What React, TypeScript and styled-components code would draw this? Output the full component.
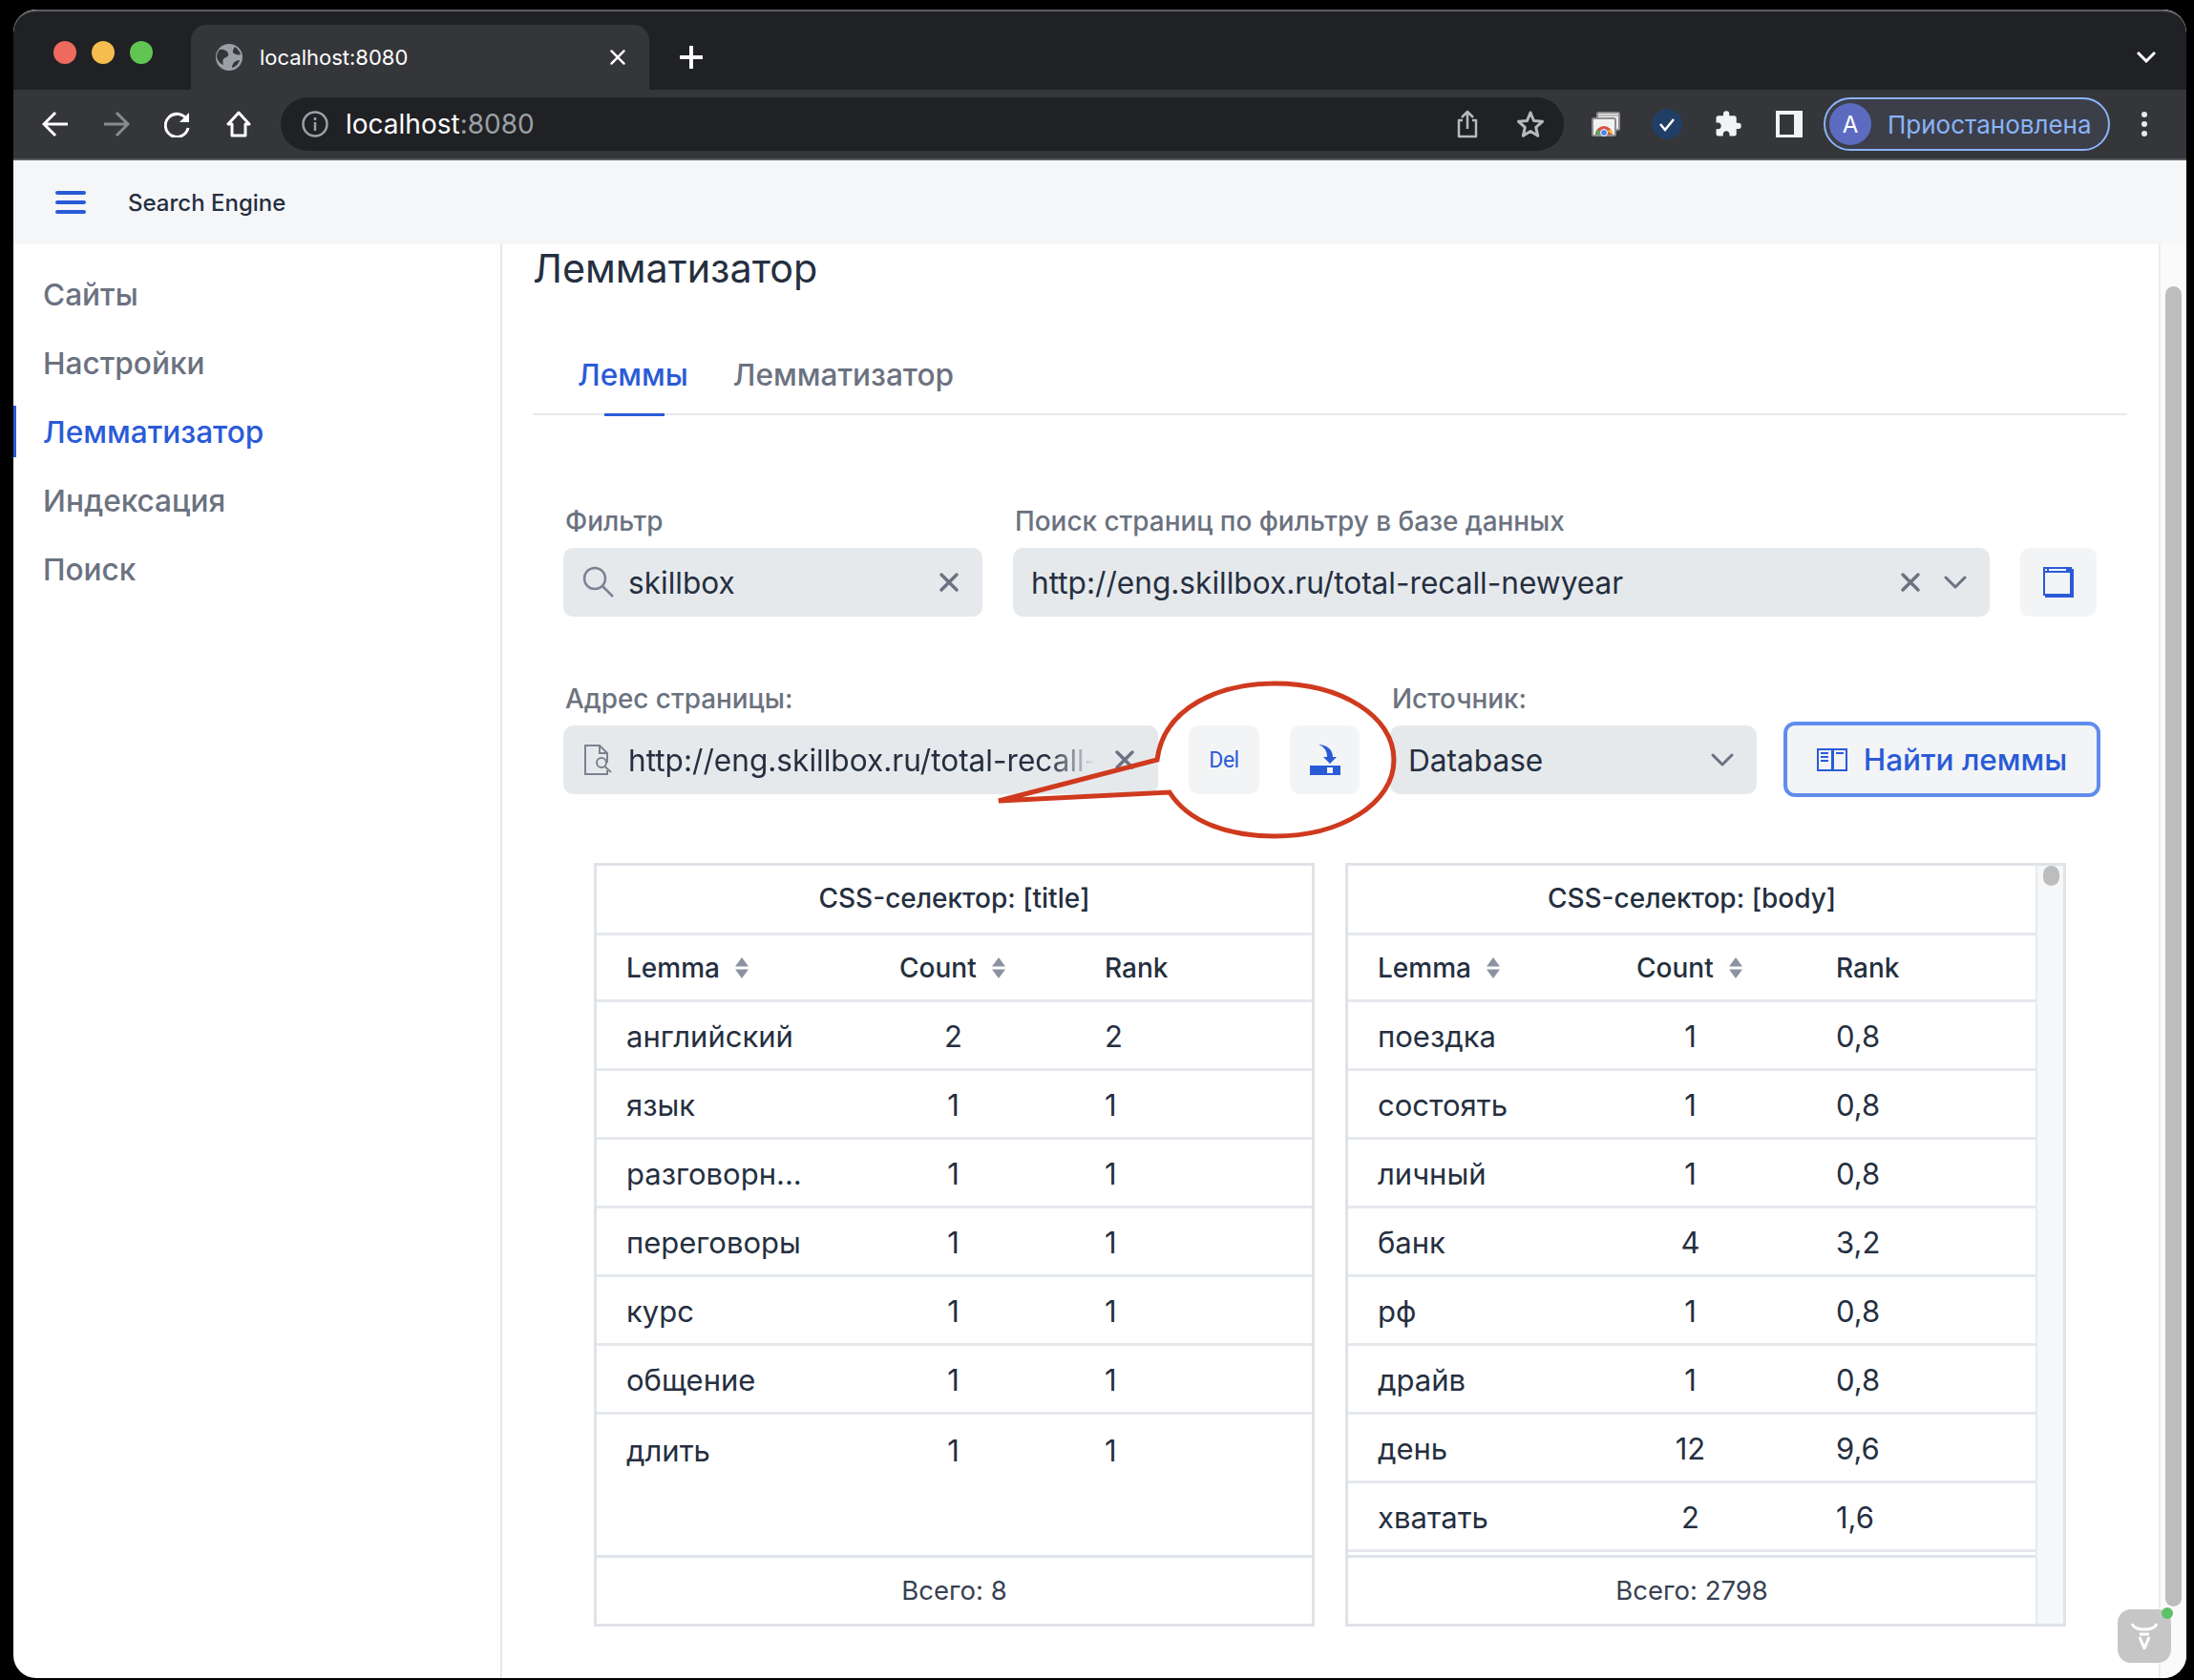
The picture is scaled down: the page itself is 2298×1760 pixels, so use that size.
import React from 'react';
import styled, { createGlobalStyle } from 'styled-components';

const Global = createGlobalStyle`
  html, body { margin: 0; padding: 0; background: #000; }
  body { font-family: Inter, "Noto Sans", sans-serif; color: #252f3f; }
  * { box-sizing: border-box; }
`;

const BLUE = '#2a5bd7';
const INK = '#252f3f';

const Page = styled.div`
  width: 2298px;
  height: 1760px;
  padding: 10px 8px 2px 14px;
  background: #000;
  overflow: hidden;
`;
const Win = styled.div`
  position: relative;
  width: 100%;
  height: 100%;
  border-radius: 24px;
  overflow: hidden;
  background: #fff;
  display: flex;
  flex-direction: column;
`;
const TabStrip = styled.div`
  height: 84px;
  background: #202124;
  border-top: 2px solid #5c5d60;
  border-radius: 24px 24px 0 0;
  display: flex;
  align-items: flex-end;
  padding-left: 42px;
`;
const Lights = styled.div`
  display: flex;
  gap: 16px;
  width: 144px;
  align-self: flex-start;
  padding-top: 31px;
`;
const Light = styled.span<{ $c: string }>`
  width: 24px;
  height: 24px;
  border-radius: 50%;
  background: ${p => p.$c};
`;
const Tab = styled.div`
  width: 480px;
  height: 68px;
  background: #35363a;
  border-radius: 16px 16px 0 0;
  display: flex;
  align-items: center;
  padding: 0 24px 0 26px;
  color: #fff;
  font-size: 22px;
  gap: 18px;
`;
const TabTitle = styled.span`
  flex: 1;
`;
const NewTab = styled.div`
  margin-left: 31px;
  height: 68px;
  display: flex;
  align-items: center;
`;
const StripEnd = styled.div`
  margin-left: auto;
  margin-right: 32px;
  height: 68px;
  display: flex;
  align-items: center;
`;
const Toolbar = styled.div`
  height: 74px;
  background: #35363a;
  border-bottom: 2px solid #5b5c5f;
  display: flex;
  align-items: center;
  padding: 0 0 0 30px;
`;
const Nav = styled.div`
  display: flex;
  gap: 36px;
`;
const NavBtn = styled.div`
  width: 28px;
  height: 30px;
  display: flex;
  align-items: center;
`;
const Omni = styled.div`
  margin-left: 30px;
  width: 1344px;
  height: 56px;
  background: #202124;
  border-radius: 28px;
  display: flex;
  align-items: center;
  padding: 0 20px 0 22px;
  font-size: 28px;
  color: #fff;
`;
const Host = styled.span`
  margin-left: 18px;
  flex: 1;
`;
const Dim = styled.span`
  color: #9aa0a6;
`;
const OmniIcon = styled.span<{ $ml: number }>`
  display: flex;
  margin-left: ${p => p.$ml}px;
`;
const Ext = styled.div`
  width: 64px;
  display: flex;
  justify-content: center;
  align-items: center;
`;
const Exts = styled.div`
  margin-left: 12px;
  display: flex;
`;
const Profile = styled.div`
  margin-left: 4px;
  width: 300px;
  height: 56px;
  border: 2px solid #8ab4f8;
  border-radius: 28px;
  background: #3c3f4a;
  display: flex;
  align-items: center;
  padding-left: 4px;
  color: #8ab4f8;
  font-size: 26px;
`;
const Avatar = styled.span`
  width: 44px;
  height: 44px;
  border-radius: 50%;
  background: #5c6bc0;
  color: #fff;
  font-size: 24px;
  display: flex;
  align-items: center;
  justify-content: center;
  margin-right: 17px;
`;
const Kebab = styled.div`
  margin-left: 33px;
  display: flex;
  flex-direction: column;
  gap: 4px;
  span { width: 6px; height: 6px; border-radius: 50%; background: #e8eaed; display: block; }
`;
const AppBar = styled.div`
  height: 88px;
  background: #f5f6f8;
  display: flex;
  align-items: center;
  padding-left: 44px;
  font-size: 24px;
  font-weight: 500;
  color: ${INK};
  gap: 44px;
`;
const Burger = styled.div`
  width: 32px;
  display: flex;
  flex-direction: column;
  gap: 6px;
  span { height: 4px; border-radius: 2px; background: ${BLUE}; display: block; }
`;
const Body = styled.div`
  flex: 1;
  display: flex;
  min-height: 0;
`;
const Side = styled.nav`
  width: 512px;
  border-right: 2px solid #e5e7eb;
  padding-top: 16px;
`;
const SideItem = styled.div<{ $active?: boolean }>`
  height: 72px;
  display: flex;
  align-items: center;
  padding-left: 31px;
  font-size: 31.600px;
  font-weight: 500;
  color: ${p => (p.$active ? BLUE : '#6b7280')};
  position: relative;
  ${p =>
    p.$active &&
    `&::before { content: ''; position: absolute; left: 0; top: 9px; bottom: 9px; width: 3px; background: ${BLUE}; }`}
`;
const Main = styled.main`
  flex: 1;
  min-width: 0;
  padding: 0 33px 0 32px;
`;
const Title = styled.h1`
  margin: 0;
  height: 50px;
  font-size: 41.300px;
  line-height: 50px;
  font-weight: 400;
  color: ${INK};
  white-space: nowrap;
`;
const Tabs = styled.div`
  margin-top: 44px;
  height: 85px;
  border-bottom: 2px solid #e5e7eb;
  display: flex;
  padding-left: 47px;
  gap: 47px;
`;
const TabLink = styled.div<{ $active?: boolean }>`
  position: relative;
  font-size: 31.600px;
  font-weight: 500;
  height: 84px;
  line-height: 86px;
  color: ${p => (p.$active ? BLUE : '#6b7280')};
  ${p =>
    p.$active &&
    `&::after { content: ''; position: absolute; left: 28px; right: 25px; bottom: -2px; height: 3px; background: ${BLUE}; }`}
`;
const Row = styled.div<{ $top: number }>`
  display: flex;
  align-items: flex-end;
  margin-top: ${p => p.$top}px;
  padding-left: 32px;
`;
const Field = styled.div<{ $w: number; $ml?: number }>`
  width: ${p => p.$w}px;
  margin-left: ${p => p.$ml ?? 0}px;
  flex: none;
`;
const Label = styled.div`
  font-size: 27.900px;
  line-height: 32px;
  height: 32px;
  margin-bottom: 12px;
  padding-left: 2px;
  color: #6b7280;
  font-weight: 500;
  white-space: nowrap;
`;
const Control = styled.div`
  height: 72px;
  background: #e6e9ec;
  border-radius: 10px;
  display: flex;
  align-items: center;
  padding: 0 24px 0 19px;
  font-size: 31.600px;
  color: ${INK};
  overflow: hidden;
`;
const ControlText = styled.span<{ $ml?: number; $fade?: boolean }>`
  flex: 1;
  min-width: 0;
  margin-left: ${p => p.$ml ?? 0}px;
  white-space: nowrap;
  overflow: hidden;
  ${p =>
    p.$fade &&
    `margin-right: 20px; -webkit-mask-image: linear-gradient(to right, #000 90%, transparent 100%); mask-image: linear-gradient(to right, #000 90%, transparent 100%);`}
`;
const Spacer = styled.span<{ $w: number }>`
  width: ${p => p.$w}px;
  flex: none;
`;
const IconBtn = styled.div<{ $w: number; $ml: number }>`
  width: ${p => p.$w}px;
  margin-left: ${p => p.$ml}px;
  height: 72px;
  flex: none;
  background: #f3f4f6;
  border-radius: 10px;
  display: flex;
  align-items: center;
  justify-content: center;
  color: ${BLUE};
  font-family: Roboto, Inter, sans-serif;
  font-size: 23px;
  letter-spacing: -0.500px;
`;
const Primary = styled.div`
  width: 332px;
  height: 79px;
  margin-left: 28px;
  margin-bottom: -3px;
  flex: none;
  background: #f3f4f6;
  border: 4px solid #5f8ded;
  border-radius: 12px;
  display: flex;
  align-items: center;
  justify-content: center;
  gap: 17px;
  color: ${BLUE};
  font-size: 31.500px;
  font-weight: 500;
`;
const Tables = styled.div`
  display: flex;
  gap: 32px;
  margin-top: 72px;
  margin-left: 64px;
`;
const Table = styled.div`
  position: relative;
  width: 755px;
  height: 800px;
  border: 3px solid #dfe3e8;
  display: flex;
  flex-direction: column;
  color: ${INK};
`;
const Caption = styled.div<{ $inset?: number }>`
  height: 73px;
  flex: none;
  border-bottom: 3px solid #e5e8ec;
  padding-right: ${p => p.$inset ?? 0}px;
  padding-bottom: 2px;
  display: flex;
  align-items: center;
  justify-content: center;
  font-size: 28px;
  font-weight: 500;
`;
const GridRow = styled.div<{ $cols: string; $h?: number; $inset?: number; $plain?: boolean; $head?: boolean }>`
  height: ${p => p.$h ?? 72}px;
  flex: none;
  margin-right: ${p => p.$inset ?? 0}px;
  display: grid;
  grid-template-columns: ${p => p.$cols};
  align-items: center;
  border-bottom: ${p => (p.$plain ? '0' : '3px solid #e5e8ec')};
  font-size: 31px;
  padding-top: ${p => (p.$head ? 0 : 2)}px;
`;
const Head = styled.div`
  display: flex;
  align-items: center;
  gap: 15px;
  font-size: 28px;
  font-weight: 500;
`;
const CountCell = styled.div`
  width: 113px;
  text-align: center;
`;
const RowsArea = styled.div`
  flex: 1;
  min-height: 0;
`;
const Foot = styled.div<{ $inset?: number }>`
  height: 72px;
  flex: none;
  border-top: 3px solid #dfe3e8;
  margin-right: ${p => p.$inset ?? 0}px;
  padding-bottom: 2px;
  display: flex;
  align-items: center;
  justify-content: center;
  font-size: 27.500px;
  color: #374151;
`;
const InnerTrack = styled.div`
  position: absolute;
  top: 0;
  bottom: 0;
  right: 0;
  width: 29px;
  background: #f6f7f8;
  border-left: 2px solid #e8ebee;
`;
const InnerThumb = styled.div`
  position: absolute;
  top: 0;
  left: 6px;
  width: 17px;
  height: 21px;
  border-radius: 9px;
  background: #bdbdbd;
`;
const ScrollTrack = styled.div`
  width: 29px;
  flex: none;
  background: #fafafa;
  border-left: 2px solid #ececec;
  padding: 44px 5px 0 5px;
`;
const ScrollThumb = styled.div`
  height: 1383px;
  width: 17px;
  border-radius: 9px;
  background: #bdbdbd;
`;
const Badge = styled.div`
  position: absolute;
  left: 2204px;
  top: 1676px;
  width: 56px;
  height: 56px;
  border-radius: 14px;
  background: #c6c6c6;
  display: flex;
  align-items: center;
  justify-content: center;
  &::after {
    content: '';
    position: absolute;
    right: -2px;
    top: -2px;
    width: 12px;
    height: 12px;
    border-radius: 50%;
    background: #5cc169;
  }
`;
const Callout = styled.svg`
  position: absolute;
  left: 0;
  top: 0;
  pointer-events: none;
`;

const X = ({ s = 22, c = '#6b7280', w = 3.500 }: { s?: number; c?: string; w?: number }) => (
  <svg width={s} height={s} viewBox="0 0 22 22" fill="none" stroke={c} strokeWidth={w} strokeLinecap="round">
    <path d="M3 3l16 16M19 3L3 19" />
  </svg>
);
const Chev = ({ c = '#6b7280' }: { c?: string }) => (
  <svg width="24" height="14" viewBox="0 0 24 14" fill="none" stroke={c} strokeWidth="3" strokeLinecap="round" strokeLinejoin="round">
    <path d="M2 2l10 10L22 2" />
  </svg>
);
const Sort = () => (
  <svg width="16" height="22" viewBox="0 0 16 22" fill="#8b93a1">
    <path d="M8 0l7 9.500H1zM8 22L1 12.500h14z" />
  </svg>
);

const left = ['английский', 'язык', 'разговорн...', 'переговоры', 'курс', 'общение', 'длить'];
const leftN = [['2', '2'], ['1', '1'], ['1', '1'], ['1', '1'], ['1', '1'], ['1', '1'], ['1', '1']];
const right = ['поездка', 'состоять', 'личный', 'банк', 'рф', 'драйв', 'день', 'хватать'];
const rightN = [['1', '0,8'], ['1', '0,8'], ['1', '0,8'], ['4', '3,2'], ['1', '0,8'], ['1', '0,8'], ['12', '9,6'], ['2', '1,6']];

const Cols1 = '31px 286px 215px 1fr';
const Cols2 = '31px 271px 209px 1fr';

function DataTable({ title, names, nums, foot, cols, inset, scroll, plainLast }: {
  title: string; names: string[]; nums: string[][]; foot: string; cols: string; inset: number; scroll?: boolean; plainLast?: boolean;
}) {
  return (
    <Table>
      {scroll && (
        <InnerTrack>
          <InnerThumb />
        </InnerTrack>
      )}
      <Caption $inset={inset}>{title}</Caption>
      <GridRow $cols={cols} $h={70} $inset={inset} $head>
        <span />
        <Head>Lemma <Sort /></Head>
        <Head>Count <Sort /></Head>
        <Head>Rank</Head>
      </GridRow>
      <RowsArea>
        {names.map((n, i) => (
          <GridRow key={n} $cols={cols} $inset={inset} $plain={plainLast && i === names.length - 1}>
            <span />
            <div>{n}</div>
            <CountCell>{nums[i][0]}</CountCell>
            <div>{nums[i][1]}</div>
          </GridRow>
        ))}
      </RowsArea>
      <Foot $inset={inset}>{foot}</Foot>
    </Table>
  );
}

export default function App() {
  return (
    <Page>
      <Global />
      <Win>
        <TabStrip>
          <Lights>
            <Light $c="#ee6a5e" />
            <Light $c="#f5bd4f" />
            <Light $c="#61c554" />
          </Lights>
          <Tab>
            <svg width="28" height="28" viewBox="0 0 28 28">
              <circle cx="14" cy="14" r="14" fill="#9aa0a6" />
              <path d="M4 6c4-1 8 1 9 4s-2 4-4 5-2 4-1 7c-3-1-6-4-7-8 0-3 1-6 3-8zM20 3c3 2 5 5 6 8-3 1-5 0-7-1s-1-4 1-7zM25 17c-1 4-4 7-8 8 0-4 3-8 8-8z" fill="#35363a" />
            </svg>
            <TabTitle>localhost:8080</TabTitle>
            <X s={18} c="#fff" w={3} />
          </Tab>
          <NewTab>
            <svg width="26" height="26" viewBox="0 0 26 26" stroke="#fff" strokeWidth="4">
              <path d="M13 1v24M1 13h24" />
            </svg>
          </NewTab>
          <StripEnd>
            <svg width="20" height="12" viewBox="0 0 20 12" fill="none" stroke="#fff" strokeWidth="3">
              <path d="M1 1l9 9 9-9" />
            </svg>
          </StripEnd>
        </TabStrip>
        <Toolbar>
          <Nav>
            <NavBtn>
              <svg width="28" height="28" viewBox="0 0 28 28" fill="none" stroke="#fff" strokeWidth="3">
                <path d="M27 14H3M14 2L2 14l12 12" />
              </svg>
            </NavBtn>
            <NavBtn>
              <svg width="28" height="28" viewBox="0 0 28 28" fill="none" stroke="#8a8b8e" strokeWidth="3">
                <path d="M1 14h24M14 2l12 12-12 12" />
              </svg>
            </NavBtn>
            <NavBtn>
              <svg width="28" height="28" viewBox="0 0 28 28" fill="none" stroke="#fff" strokeWidth="3">
                <path d="M24 10a12 12 0 1 0 1 8" />
                <path d="M26 2v10H16z" fill="#fff" stroke="none" />
              </svg>
            </NavBtn>
            <NavBtn>
              <svg width="28" height="28" viewBox="0 0 28 28" fill="none" stroke="#fff" strokeWidth="3">
                <path d="M14 2L3 14h4v12h14V14h4z" strokeLinejoin="round" />
              </svg>
            </NavBtn>
          </Nav>
          <Omni>
            <svg width="28" height="28" viewBox="0 0 28 28" fill="none" stroke="#9aa0a6" strokeWidth="2.500">
              <circle cx="14" cy="14" r="12.500" />
              <path d="M14 12v9M14 7v3" />
            </svg>
            <Host>
              localhost<Dim>:8080</Dim>
            </Host>
            <OmniIcon $ml={32}>
              <svg width="24" height="30" viewBox="0 0 24 30" fill="none" stroke="#b8b9bb" strokeWidth="2.500" strokeLinejoin="round">
                <path d="M7 11H3v17h18V11h-4M12 20V2M6 8l6-6 6 6" />
              </svg>
            </OmniIcon>
            <OmniIcon $ml={39}>
              <svg width="30" height="30" viewBox="0 0 30 30" fill="none" stroke="#b8b9bb" strokeWidth="3" strokeLinejoin="round">
                <path d="M15 3l3.500 8.500 9 .8-6.800 6 2 9L15 22.500 7.300 27.300l2-9-6.800-6 9-.8z" />
              </svg>
            </OmniIcon>
          </Omni>
          <Exts>
            <Ext>
              <svg width="30" height="26" viewBox="0 0 30 26">
                <rect x="6" y="1" width="23" height="18" rx="1.500" fill="#ececec" stroke="#8e8e8e" strokeWidth="2" />
                <rect x="7" y="3" width="21" height="2" fill="#bdbdbd" />
                <rect x="1" y="7" width="24" height="18" rx="1.500" fill="#f2f2f2" stroke="#8e8e8e" strokeWidth="2" />
                <path d="M4 24a9 9 0 0 1 18 0z" fill="#d9503f" />
                <path d="M4 24a9 9 0 0 1 2.500-6.200L10 24z" fill="#5aa85c" />
                <path d="M22 24a9 9 0 0 0-1.500-5L16 20z" fill="#f3c341" />
                <circle cx="13" cy="22" r="3.500" fill="#4a86e8" stroke="#fff" strokeWidth="1" />
              </svg>
            </Ext>
            <Ext>
              <svg width="32" height="32" viewBox="0 0 32 32" fill="none">
                <circle cx="16" cy="16" r="16" fill="#213f66" />
                <path d="M9 16l5 6 9-11" stroke="#fff" strokeWidth="2.500" />
              </svg>
            </Ext>
            <Ext>
              <svg width="30" height="30" viewBox="0 0 24 24" fill="#f1f3f4">
                <path d="M20.500 11H19V7a2 2 0 0 0-2-2h-4V3.500a2.500 2.500 0 0 0-5 0V5H4a2 2 0 0 0-2 2v3.800h1.500c1.500 0 2.700 1.200 2.700 2.700s-1.200 2.700-2.700 2.700H2V20a2 2 0 0 0 2 2h3.800v-1.500c0-1.500 1.200-2.700 2.700-2.700s2.700 1.200 2.700 2.700V22H17a2 2 0 0 0 2-2v-4h1.500a2.500 2.500 0 0 0 0-5z" />
              </svg>
            </Ext>
            <Ext>
              <svg width="28" height="28" viewBox="0 0 28 28" fill="none">
                <path d="M0 0h28v28H0zM4 4v21h15V4z" fill="#f1f3f4" fillRule="evenodd" />
              </svg>
            </Ext>
          </Exts>
          <Profile>
            <Avatar>A</Avatar>
            Приостановлена
          </Profile>
          <Kebab>
            <span />
            <span />
            <span />
          </Kebab>
        </Toolbar>
        <AppBar>
          <Burger>
            <span />
            <span />
            <span />
          </Burger>
          Search Engine
        </AppBar>
        <Body>
          <Side>
            <SideItem>Сайты</SideItem>
            <SideItem>Настройки</SideItem>
            <SideItem $active>Лемматизатор</SideItem>
            <SideItem>Индексация</SideItem>
            <SideItem>Поиск</SideItem>
          </Side>
          <Main>
            <Title>Лемматизатор</Title>
            <Tabs>
              <TabLink $active>Леммы</TabLink>
              <TabLink>Лемматизатор</TabLink>
            </Tabs>
            <Row $top={95}>
              <Field $w={439}>
                <Label>Фильтр</Label>
                <Control>
                  <svg width="36" height="36" viewBox="0 0 36 36" fill="none" stroke="#7b8391" strokeWidth="2.500">
                    <circle cx="14" cy="14" r="11" />
                    <path d="M22 22l11 11" />
                  </svg>
                  <ControlText $ml={13}>skillbox</ControlText>
                  <X />
                </Control>
              </Field>
              <Field $w={1023} $ml={32}>
                <Label>Поиск страниц по фильтру в базе данных</Label>
                <Control>
                  <ControlText>http://eng.skillbox.ru/total-recall-newyear</ControlText>
                  <X />
                  <Spacer $w={24} />
                  <Chev />
                </Control>
              </Field>
              <IconBtn $w={80} $ml={32}>
                <svg width="32" height="32" viewBox="0 0 32 32" fill={BLUE}>
                  <path fillRule="evenodd" d="M0 0H30V2H32V32H2V30H0zM2 6V28H28V6zM2 2V4H4V2zM6 2V4H24V2z" />
                </svg>
              </IconBtn>
            </Row>
            <Row $top={70}>
              <Field $w={623}>
                <Label>Адрес страницы:</Label>
                <Control>
                  <svg width="32" height="32" viewBox="0 0 32 32" fill="none" stroke="#7b8391" strokeWidth="2">
                    <path d="M27 19V9L19 1H4V31H27V27M19 1V9H27" />
                    <circle cx="21" cy="19" r="5" />
                    <path d="M24.500 23l6.500 6" />
                  </svg>
                  <ControlText $ml={17} $fade>
                    http://eng.skillbox.ru/total-recall-newyear
                  </ControlText>
                  <X />
                </Control>
              </Field>
              <IconBtn $w={74} $ml={32}>Del</IconBtn>
              <IconBtn $w={73} $ml={32}>
                <svg width="32" height="32" viewBox="0 0 32 32" fill={BLUE}>
                  <path d="M9 0C17 0 24 5 24 13H28L21 20L14 13H18C18 7 15 2 9 0Z" />
                  <path fillRule="evenodd" d="M0 22H32V32H0zM18 24V30H24V24z" />
                </svg>
              </IconBtn>
              <Field $w={384} $ml={32}>
                <Label>Источник:</Label>
                <Control>
                  <ControlText>Database</ControlText>
                  <Chev />
                </Control>
              </Field>
              <Primary>
                <svg width="32" height="24" viewBox="0 0 32 24" fill={BLUE}>
                  <path fillRule="evenodd" d="M0 0H32V24H0zM2 2V22H15V2zM18 2V22H30V2z" />
                  <path d="M4 4H12V6H4zM4 8H12V10H4zM4 12H12V14H4zM20 4H28V6H20z" />
                </svg>
                Найти леммы
              </Primary>
            </Row>
            <Tables>
              <DataTable title="CSS-селектор: [title]" names={left} nums={leftN} foot="Всего: 8" cols={Cols1} inset={0} plainLast />
              <DataTable title="CSS-селектор: [body]" names={right} nums={rightN} foot="Всего: 2798" cols={Cols2} inset={29} scroll />
            </Tables>
          </Main>
          <ScrollTrack>
            <ScrollThumb />
          </ScrollTrack>
        </Body>
        <Callout width="2276" height="1748" viewBox="0 0 2276 1748" fill="none">
          <path
            d="M1198 786 C1205 730 1265 706 1321 706 C1390 706 1446 740 1446 786 C1446 832 1390 866 1321 866 C1270 866 1230 850 1211 820 L1032 829 Z"
            stroke="#cf3a1e"
            strokeWidth="5"
            strokeLinejoin="miter"
          />
        </Callout>
        <Badge>
          <svg width="28" height="28" viewBox="0 0 28 28" fill="none" stroke="#fff" strokeWidth="3">
            <path d="M1 1c2 5 7 6 13 6s11-1 13-6M9 12h10M9 15l5 12 5-12" />
          </svg>
        </Badge>
      </Win>
    </Page>
  );
}
